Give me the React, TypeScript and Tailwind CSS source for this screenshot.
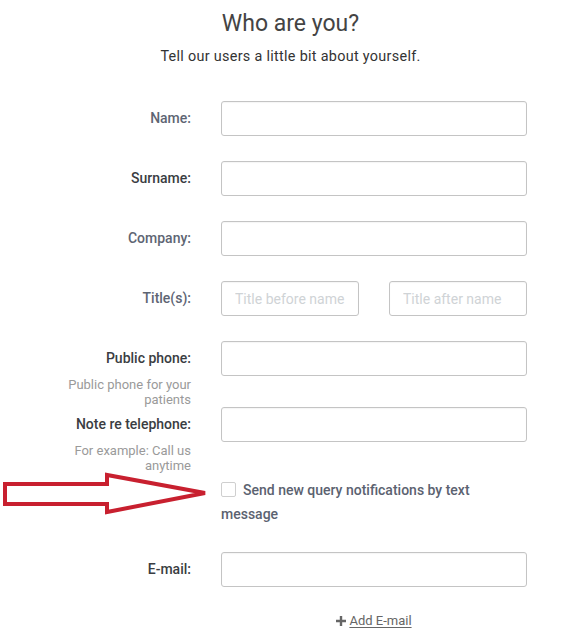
import React from "react";

const Label = ({ text, strong, hint }: { text: string; strong?: boolean; hint?: React.ReactNode }) => (
  <div className="w-[140px] shrink-0 flex flex-col items-end text-right">
    <div className={`h-[35px] flex items-center text-[14px] font-medium ${strong ? "text-[#3a3d42]" : "text-[#5e6573]"}`}>{text}</div>
    {hint && <div className="text-[13px] leading-[15px] text-[#9a9a9a] mt-[1px]">{hint}</div>}
  </div>
);

const Input = ({ placeholder, className = "" }: { placeholder?: string; className?: string }) => (
  <input
    placeholder={placeholder}
    className={`h-[35px] border border-[#c4c4c4] rounded-[3px] bg-white px-[13px] text-[14px] text-[#333] placeholder:text-[#cfd3d6] outline-none shadow-[inset_0_1px_1px_rgba(0,0,0,0.04)] ${className}`}
  />
);

export default function App() {
  return (
    <div className="w-[581px] h-[640px] bg-white relative overflow-hidden" style={{ fontFamily: "Roboto, 'Liberation Sans', sans-serif" }}>
      <div className="flex flex-col items-center pt-[10px]">
        <h1 className="text-[23px] leading-[28px] text-[#444] font-normal">Who are you?</h1>
        <p className="mt-[10px] text-[14.4px] leading-[18px] text-[#333] tracking-[0.3px]">Tell our users a little bit about yourself.</p>
      </div>

      <div className="pl-[51px] mt-[35px] flex flex-col">
        <div className="flex gap-[30px]">
          <Label text="Name:" />
          <Input className="w-[306px]" />
        </div>
        <div className="flex gap-[30px] mt-[25px]">
          <Label text="Surname:" strong />
          <Input className="w-[306px]" />
        </div>
        <div className="flex gap-[30px] mt-[25px]">
          <Label text="Company:" />
          <Input className="w-[306px]" />
        </div>
        <div className="flex gap-[30px] mt-[25px]">
          <Label text="Title(s):" />
          <div className="flex gap-[30px]">
            <Input placeholder="Title before name" className="w-[138px]" />
            <Input placeholder="Title after name" className="w-[138px]" />
          </div>
        </div>
        <div className="flex gap-[30px] mt-[25px]">
          <Label text="Public phone:" strong hint={<>Public phone for your<br />patients</>} />
          <Input className="w-[306px]" />
        </div>
        <div className="flex gap-[30px]">
          <Label text="Note re telephone:" strong hint={<>For example: Call us<br />anytime</>} />
          <Input className="w-[306px]" />
        </div>
        <div className="flex gap-[30px] mt-[5px]">
          <div className="w-[140px] shrink-0" />
          <div className="w-[306px] text-[14px] leading-[24px] font-medium text-[#5b6270]">
            <span className="inline-block w-[15px] h-[15px] border border-[#cfcfcf] rounded-[2px] align-[-2px] mr-[7px] bg-white" />
            Send new query notifications by text message
          </div>
        </div>
        <div className="flex gap-[30px] mt-[26px]">
          <Label text="E-mail:" strong />
          <Input className="w-[306px]" />
        </div>
        <div className="flex gap-[30px] mt-[26px]">
          <div className="w-[140px] shrink-0" />
          <div className="w-[306px] flex justify-center">
            <a className="text-[13px] leading-[16px] text-[#666] underline underline-offset-2 flex items-center gap-[3px] cursor-pointer">
              <svg width="10" height="10" viewBox="0 0 10 10" className="mb-[1px]">
                <path d="M3.8 0h2.4v3.8H10v2.4H6.2V10H3.8V6.2H0V3.8h3.8z" fill="#666" />
              </svg>
              Add E-mail
            </a>
          </div>
        </div>
      </div>

      <svg className="absolute left-0 top-[468px]" width="215" height="52" viewBox="0 0 215 52">
        <polygon
          points="5,16 107,16 107,7 205,25 107,44 107,36 5,36"
          fill="none"
          stroke="#c8202f"
          strokeWidth="4"
          strokeLinejoin="miter"
        />
      </svg>
    </div>
  );
}
